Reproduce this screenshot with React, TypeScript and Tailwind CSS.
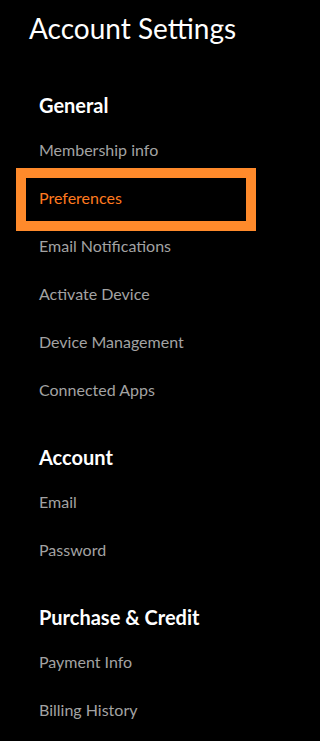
import React from "react"

interface Section {
  title: string
  items: string[]
}

const sections: Section[] = [
  {
    title: "General",
    items: [
      "Membership info",
      "Preferences",
      "Email Notifications",
      "Activate Device",
      "Device Management",
      "Connected Apps",
    ],
  },
  { title: "Account", items: ["Email", "Password"] },
  { title: "Purchase & Credit", items: ["Payment Info", "Billing History"] },
]

const ACTIVE = "Preferences"

export default function App() {
  return (
    <div
      className="min-h-screen bg-black text-white"
      style={{ fontFamily: "Lato, 'Open Sans', sans-serif" }}
    >
      <h1 className="pt-[11px] pl-[29px] text-[28px] leading-[34px] font-normal text-white">
        Account Settings
      </h1>

      <nav className="mt-[39px]">
        {sections.map((section, i) => (
          <div key={section.title} className={i > 0 ? "mt-[22px]" : ""}>
            <h2 className="h-[42px] flex items-center pl-[39px] text-[20px] font-bold text-white">
              {section.title}
            </h2>
            <ul>
              {section.items.map((item) => {
                const active = item === ACTIVE
                return (
                  <li
                    key={item}
                    className={
                      active
                        ? "relative h-12 flex items-center pl-[39px] text-[16px] text-[#ff7a1f]"
                        : "relative h-12 flex items-center pl-[39px] text-[16px] text-[#a3a3a3]"
                    }
                  >
                    {active && (
                      <span className="absolute left-[16px] top-[-6px] w-[240px] h-[63px] border-[10px] border-[#ff8a2b]" />
                    )}
                    {item}
                  </li>
                )
              })}
            </ul>
          </div>
        ))}
      </nav>
    </div>
  )
}
